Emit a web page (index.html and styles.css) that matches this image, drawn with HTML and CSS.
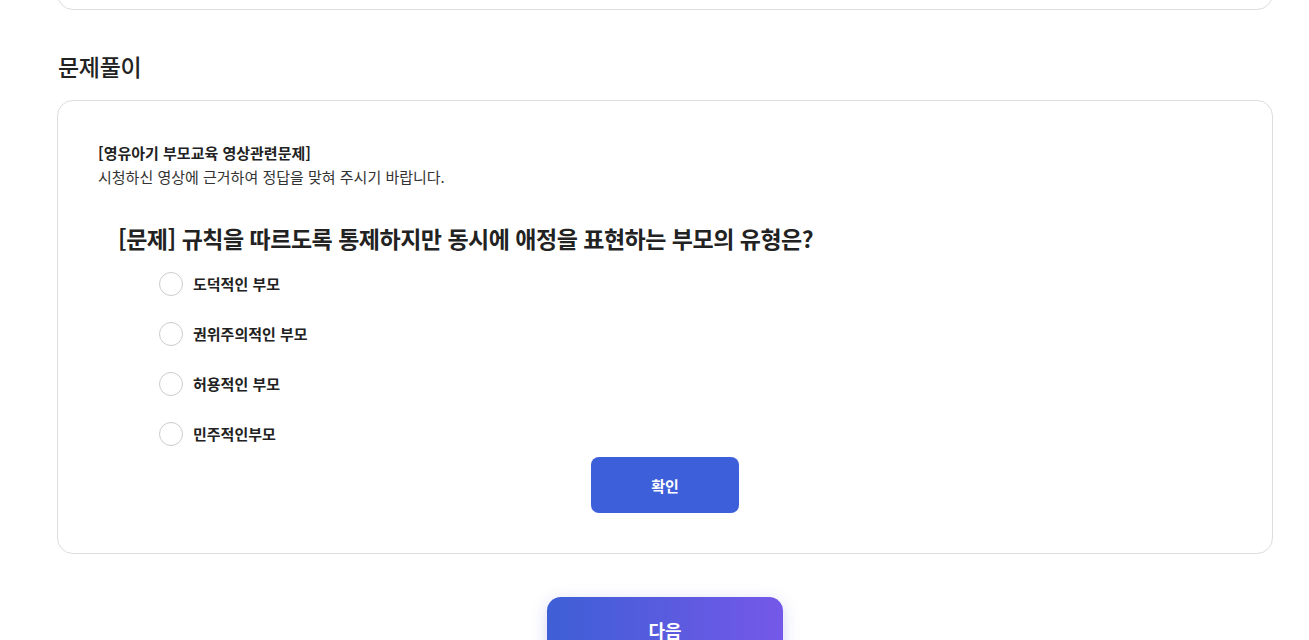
FILE: index.html
```html
<!DOCTYPE html>
<html lang="ko">
<head>
    <meta charset="UTF-8">
    <meta name="viewport" content="width=device-width, initial-scale=1.0">
    <title>문제풀이</title>
    <link rel="stylesheet" href="styles.css">
</head>
<body>

    <div class="page">
        <div class="video-card"></div>

        <h2 class="section-title">문제풀이</h2>

        <div class="quiz-card">
            <div class="quiz-intro">
                <strong>[영유아기 부모교육 영상관련문제]</strong>
                <p>시청하신 영상에 근거하여 정답을 맞혀 주시기 바랍니다.</p>
            </div>

            <h3 class="question">[문제] 규칙을 따르도록 통제하지만 동시에 애정을 표현하는 부모의 유형은?</h3>

            <ul class="options">
                <li><label><input type="radio" name="answer"><span class="radio"></span>도덕적인 부모</label></li>
                <li><label><input type="radio" name="answer"><span class="radio"></span>권위주의적인 부모</label></li>
                <li><label><input type="radio" name="answer"><span class="radio"></span>허용적인 부모</label></li>
                <li><label><input type="radio" name="answer"><span class="radio"></span>민주적인부모</label></li>
            </ul>

            <div class="confirm-row">
                <button class="btn-confirm">확인</button>
            </div>
        </div>

        <div class="next-row">
            <button class="btn-next">다음</button>
        </div>
    </div>

</body>
</html>
```

FILE: styles.css
```css
body {
    margin: 0;
    font-family: "Noto Sans CJK KR", "Noto Sans", sans-serif;
    color: #222;
    background-color: #fff;
    overflow: hidden;
}
.page {
    width: 1216px;
    margin-left: 57px;
}
/* 위쪽 영상 카드 (스크롤되어 아래 끝만 보임) */
.video-card {
    height: 210px;
    margin-top: -200px;
    border: 1px solid #ddd;
    border-radius: 16px;
    box-sizing: border-box;
}
.section-title {
    margin: 39px 0 17px 1px;
    font-size: 23px;
    font-weight: 500;
    line-height: 34px;
    letter-spacing: -0.3px;
    color: #222;
}
.quiz-card {
    border: 1px solid #ddd;
    border-radius: 16px;
    padding: 40px 40px 40px 40px;
}
.quiz-intro strong {
    display: block;
    font-size: 15px;
    font-weight: 700;
    line-height: 24px;
}
.quiz-intro p {
    margin: 0;
    font-size: 15px;
    line-height: 24px;
    color: #333;
}
.question {
    margin: 33px 0 18px 20px;
    font-size: 23px;
    font-weight: 700;
    line-height: 32px;
    letter-spacing: -0.5px;
    color: #222;
}
.options {
    list-style: none;
    margin: 0 0 0 61px;
    padding: 0;
    display: flex;
    flex-direction: column;
    gap: 26px;
}
.options label {
    display: flex;
    align-items: center;
    gap: 10px;
    font-size: 15px;
    font-weight: 700;
    line-height: 24px;
    color: #222;
    cursor: pointer;
}
.options input {
    display: none;
}
.radio {
    width: 22px;
    height: 22px;
    border: 1px solid #ccc;
    border-radius: 50%;
    background-color: #fff;
}
.options input:checked + .radio {
    border: 7px solid #3d5fd9;
    width: 10px;
    height: 10px;
}
.confirm-row {
    display: flex;
    justify-content: center;
    margin-top: 11px;
}
.btn-confirm {
    width: 148px;
    height: 56px;
    border: none;
    border-radius: 8px;
    background-color: #3d5fd9;
    color: #fff;
    font-family: inherit;
    font-size: 15px;
    font-weight: 700;
    cursor: pointer;
}
.next-row {
    display: flex;
    justify-content: center;
    margin-top: 43px;
}
.btn-next {
    width: 236px;
    height: 66px;
    border: none;
    border-radius: 14px;
    background: linear-gradient(90deg, #3d5fd6, #7558e8);
    color: #fff;
    font-family: inherit;
    font-size: 18px;
    font-weight: 700;
    box-shadow: 0 4px 16px rgba(90, 90, 220, 0.25);
    cursor: pointer;
}
```
